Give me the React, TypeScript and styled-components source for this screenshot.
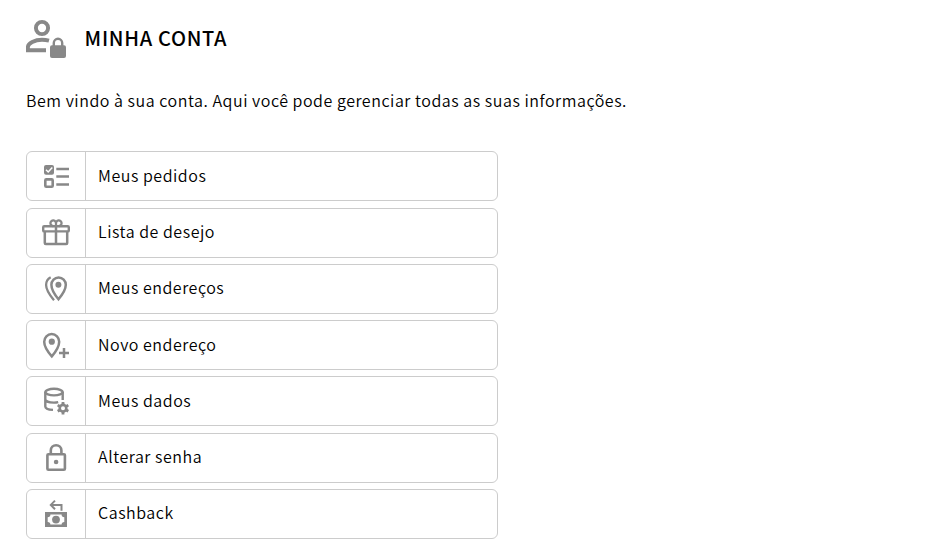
import React from 'react';
import styled, { createGlobalStyle } from 'styled-components';

const GlobalStyle = createGlobalStyle`
  *, *::before, *::after { box-sizing: border-box; }
  body {
    margin: 0;
    background: #fff;
    color: #000;
    font-family: "Noto Sans CJK JP", "Noto Sans", sans-serif;
    overflow: hidden;
  }
`;

const GRAY = '#888';

const Page = styled.main`
  padding: 18px 26px 0;
`;

const Header = styled.header`
  display: flex;
  align-items: center;
  gap: 18.6px;
  height: 40px;
`;

const HeaderIcon = styled.svg`
  width: 40px;
  height: 40px;
  flex: none;
`;

const Title = styled.h1`
  margin: 0;
  font-size: 20px;
  font-weight: 500;
  line-height: 40px;
  letter-spacing: 0.7px;
`;

const Intro = styled.p`
  margin: 30px 0 0;
  font-size: 16px;
  font-weight: 350;
  line-height: 24px;
  letter-spacing: 0.535px;
  white-space: nowrap;
`;

const Menu = styled.nav`
  display: flex;
  flex-direction: column;
  gap: 6.25px;
  width: 472px;
  margin-top: 39.25px;
`;

const MenuLink = styled.a`
  display: flex;
  height: 50px;
  border: 1px solid #ccc;
  border-radius: 6px;
  color: inherit;
  text-decoration: none;
`;

const IconCell = styled.span`
  display: flex;
  align-items: center;
  justify-content: center;
  width: 59px;
  border-right: 1px solid #ccc;
`;

const Icon = styled.svg`
  width: 30px;
  height: 30px;
  fill: none;
  stroke: ${GRAY};
  stroke-width: 2.4;
`;

const Label = styled.span`
  margin-top: -0.4px;
  padding-left: 12px;
  font-size: 16px;
  font-weight: 350;
  line-height: 46px;
  letter-spacing: 0.535px;
`;

const items: { label: string; icon: React.ReactNode }[] = [
  {
    label: 'Meus pedidos',
    icon: (
      <>
        <rect x="3" y="4" width="10" height="9.8" rx="2" fill={GRAY} stroke="none" />
        <path d="M5 8.8 7.2 11 11.3 6.6" stroke="#fff" strokeWidth="1.5" />
        <rect x="4.3" y="18.4" width="7.4" height="7.4" rx="1" strokeWidth="2.6" />
        <path d="M15.3 8H28M15.3 15.5H28M15.3 23.5H28" strokeWidth="2.4" />
      </>
    ),
  },
  {
    label: 'Lista de desejo',
    icon: (
      <>
        <rect x="2.2" y="8.2" width="25.6" height="5.2" rx="1" strokeWidth="2.4" />
        <path d="M3.8 13.5V25q0 1 1 1H25.2q1 0 1-1V13.5M15 8V26" strokeWidth="2.5" />
        <path d="M15 8V5.6A2.8 2.8 0 1 0 12.2 8M15 8V5.6A2.8 2.8 0 1 1 17.8 8" strokeWidth="2.3" />
      </>
    ),
  },
  {
    label: 'Meus endereços',
    icon: (
      <>
        <path d="M17.5 25.3C13.5 20.5 10.4 15.5 10.4 10.8a7.2 7.4 0 0 1 14.4 0C24.8 15.5 21.5 20.5 17.5 25.3Z" strokeWidth="2.5" />
        <circle cx="17.4" cy="10.7" r="3" fill={GRAY} stroke="none" />
        <path d="M9.7 3.2C6.5 4.9 5.1 7.6 5.1 11 5.1 15.5 9 21.5 13 26.3" strokeWidth="2.3" />
      </>
    ),
  },
  {
    label: 'Novo endereço',
    icon: (
      <>
        <path d="M10.8 26.4C6.5 21.5 3.2 16.6 3.2 11.8a7.5 7.7 0 0 1 15 0C18.2 16.6 15 21.5 10.8 26.4Z" strokeWidth="2.5" />
        <circle cx="10.8" cy="11.7" r="3.1" fill={GRAY} stroke="none" />
        <path d="M18 23H28M23 18V28" strokeWidth="2.5" />
      </>
    ),
  },
  {
    label: 'Meus dados',
    icon: (
      <>
        <ellipse cx="13" cy="6.1" rx="8.7" ry="3.3" strokeWidth="2.4" />
        <path d="M4.3 6V20.5C4.3 22.4 7.5 23.7 12 23.9M21.7 6V14M4.3 13.3C4.3 15.2 8 16.6 13 16.6c1.6 0 3-.2 4.2-.5" strokeWidth="2.4" />
        <circle cx="22" cy="22.2" r="3.3" strokeWidth="2.6" />
        <path d="M22 16v3M22 25.4v3M16.7 19.1l2.5 1.5M24.8 23.8l2.5 1.5M16.7 25.3l2.5-1.5M24.8 20.6l2.5-1.5" strokeWidth="2.8" />
      </>
    ),
  },
  {
    label: 'Alterar senha',
    icon: (
      <>
        <rect x="6.4" y="11.2" width="17.5" height="15.6" rx="1" strokeWidth="2.6" />
        <path d="M9.8 11V7.5a5.3 5.3 0 0 1 10.6 0V11" strokeWidth="2.6" />
        <circle cx="15.1" cy="19" r="2.3" fill={GRAY} stroke="none" />
      </>
    ),
  },
  {
    label: 'Cashback',
    icon: (
      <>
        <rect x="4" y="13" width="22" height="15" fill={GRAY} stroke="none" />
        <path d="M9.4 15.6H20.6a2.7 2.7 0 0 0 2.7 2.7V22.9a2.7 2.7 0 0 0-2.7 2.7H9.4a2.7 2.7 0 0 0-2.7-2.7V18.3a2.7 2.7 0 0 0 2.7-2.7Z" fill="#fff" stroke="none" />
        <circle cx="15" cy="20.6" r="3.9" fill={GRAY} stroke="none" />
        <path d="M14 1.6 9.8 5.9 14 10.2M9.8 5.9H20.5V11.7" strokeWidth="2" />
      </>
    ),
  },
];

export default function App() {
  return (
    <>
      <GlobalStyle />
      <Page>
        <Header>
          <HeaderIcon viewBox="0 0 40 40" fill="none" stroke={GRAY} strokeWidth="3.9" aria-hidden="true">
            <circle cx="16" cy="10" r="6.1" />
            <path d="M23 22.7C20.7 22.1 18.3 21.8 16 21.8 8.8 21.8 1.9 25.3 1.9 29V32.2H20" />
            <rect x="24" y="27.3" width="16" height="12.7" rx="2" fill={GRAY} stroke="none" />
            <path d="M27.8 28V25a4.2 4.2 0 0 1 8.4 0V28" strokeWidth="2.4" />
          </HeaderIcon>
          <Title>MINHA CONTA</Title>
        </Header>
        <Intro>Bem vindo à sua conta. Aqui você pode gerenciar todas as suas informações.</Intro>
        <Menu>
          {items.map(({ label, icon }) => (
            <MenuLink key={label}>
              <IconCell>
                <Icon viewBox="0 0 30 30" aria-hidden="true">{icon}</Icon>
              </IconCell>
              <Label>{label}</Label>
            </MenuLink>
          ))}
        </Menu>
      </Page>
    </>
  );
}
